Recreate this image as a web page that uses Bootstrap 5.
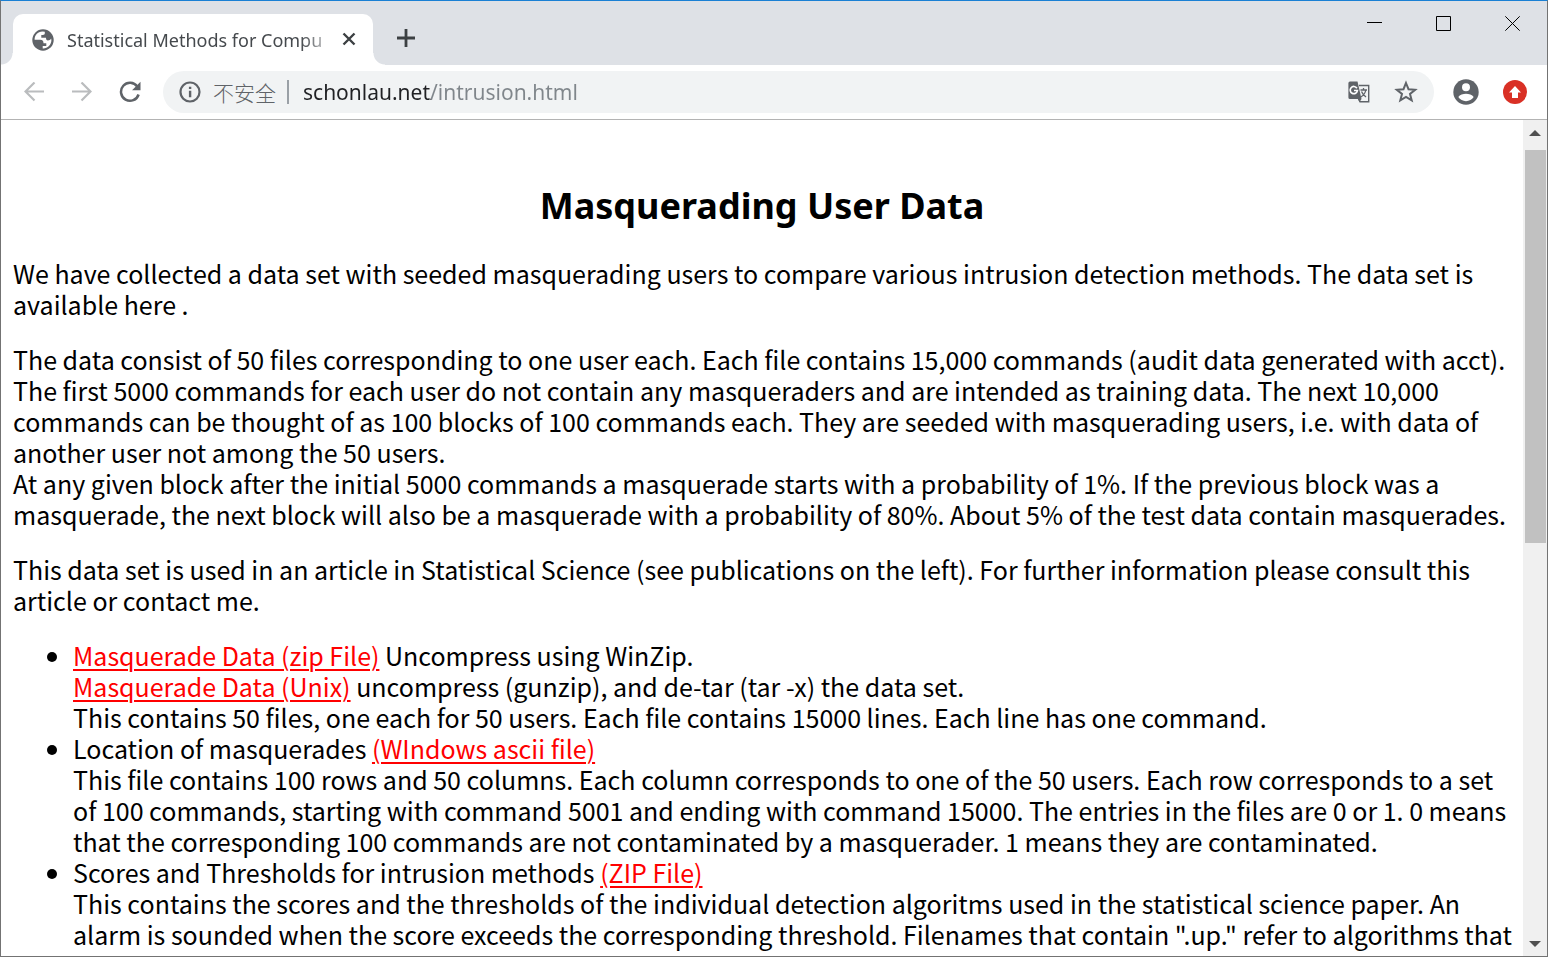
<!DOCTYPE html>
<html lang="en">
<head>
<meta charset="utf-8">
<meta name="viewport" content="width=device-width, initial-scale=1">
<title>Masquerading User Data</title>
<link href="https://cdn.jsdelivr.net/npm/bootstrap@5.3.0/dist/css/bootstrap.min.css" rel="stylesheet">
<style>
  body { font-family: "Noto Sans", "Noto Sans CJK SC", sans-serif; color: #000; background: #fff; }
  .app-window { border: 1px solid #737373; border-top-color: #1a80d4; }
  .icon-btn { border: 0; background: none; padding: 0; color: #5f6368; display: flex; align-items: center; justify-content: center; }
  .icon-btn svg, .tab-item svg { display: block; }

  /* Tab strip */
  .tab-strip { background: #dee1e6; height: 64px; }
  .tab-item { position: relative; width: 360px; height: 51px; margin-left: 12px; background: #fff; border-radius: 10px 10px 0 0; color: #3c4043; padding: 0 14px 0 19px; }
  .tab-item::before, .tab-item::after { content: ""; position: absolute; bottom: 0; width: 12px; height: 12px; }
  .tab-item::before { right: 100%; background: radial-gradient(circle at 0 0, #dee1e6 11px, #fff 12px); }
  .tab-item::after { left: 100%; background: radial-gradient(circle at 100% 0, #dee1e6 11px, #fff 12px); }
  .tab-title { margin-left: 13px; font-size: 18px; line-height: 28px; color: #45494d; -webkit-mask-image: linear-gradient(to right, #000 86%, transparent); mask-image: linear-gradient(to right, #000 86%, transparent); }
  .new-tab { height: 50px; }
  .caption-btn { width: 69px; height: 44px; color: #000; }

  /* Toolbar */
  .tool-bar { height: 55px; border-bottom: 1px solid #b3b3b3; padding: 0 20px 0 9px; }
  .nav-btn { width: 48px; height: 42px; }
  .nav-btn:disabled { color: #babcbe; }
  .omnibox { background: #f1f3f4; height: 42px; border-radius: 21px; margin: 0 19px 0 9px; padding: 0 16px 0 16px; }
  .site-label { font-family: "Noto Sans CJK SC", sans-serif; font-weight: 300; font-size: 21px; line-height: 28px; color: #5f6368; }
  .site-rule { width: 2px; height: 24px; margin-left: 11px; background: #9aa0a6; }
  .url-box { border: 0; outline: 0; margin-left: 14px; padding: 0; font-size: 21px; line-height: 32px; color: transparent; background: linear-gradient(to right, #202124 128px, #80868b 128px); -webkit-background-clip: text; background-clip: text; }

  /* Document */
  .doc { padding: 60px 12px 0 12px; font-family: "Noto Sans CJK SC", "Noto Sans", sans-serif; font-size: 25px; line-height: 31px; white-space: nowrap; }
  .doc h1 { font-family: "Noto Sans", sans-serif; font-size: 36px; line-height: 52px; font-weight: 700; margin-bottom: 26px; }
  .doc p { margin-bottom: 24px; }
  .doc ul { padding-left: 60px; }
  .doc a { color: #f00; text-decoration-thickness: 2px; text-underline-offset: 3px; }

  /* Scroll bar */
  .scroll-rail { width: 24px; background: #f0f0f0; }
  .scroll-rail .icon-btn { height: 25px; color: #505050; }
  .scroll-thumb { height: 50%; background: #c1c1c1; margin: 5px 1px 0 2px; }
</style>
</head>
<body>
<div class="app-window vh-100 d-flex flex-column overflow-hidden">
  <header>
    <div class="tab-strip d-flex">
      <div class="tab-item d-flex align-items-center align-self-end">
        <svg width="22" height="22" viewBox="0 0 22 22" aria-hidden="true"><circle cx="11" cy="11" r="10.700" fill="#5f6368"/><path fill="#fff" d="M10.500 2.600C5.500 2.600 2.600 6.500 2.600 10.800h5.600c2.600 0 3.300 1.500 3.300 3.400h2.800v2.700h-3.600v2.500c4.700.3 8.700-3.400 8.700-8.400l-.3-1.500c-.8 1.400-1.800 1.900-3.200 1.900-1.300 0-1.900-.8-1.900-2.600H9.300V5.900h1.500c1.400 0 2-.7 2-1.700V2.800z"/></svg>
        <span class="tab-title flex-grow-1 text-nowrap">Statistical Methods for Compu</span>
        <button class="icon-btn" type="button" aria-label="Close tab"><svg width="20" height="20" viewBox="0 0 20 20" stroke="#3c4043" stroke-width="2.400" fill="none"><path d="M4.500 3.500l11 11M15.500 3.500l-11 11"/></svg></button>
      </div>
      <button class="icon-btn new-tab align-self-start mt-2 pt-2 ms-4" type="button" aria-label="New tab"><svg width="18" height="18" viewBox="0 0 18 18" stroke="#3c4043" stroke-width="2.800" fill="none"><path d="M9 0v18M0 9h18"/></svg></button>
      <div class="ms-auto d-flex">
        <button class="icon-btn caption-btn" type="button" aria-label="Minimize"><svg width="15" height="15" viewBox="0 0 15 15"><path d="M0 6.500h15" stroke="#000"/></svg></button>
        <button class="icon-btn caption-btn" type="button" aria-label="Maximize"><svg width="15" height="15" viewBox="0 0 15 15"><path d="M.5.5h14v14H.5z" stroke="#000" fill="none"/></svg></button>
        <button class="icon-btn caption-btn" type="button" aria-label="Close"><svg width="15" height="15" viewBox="0 0 15 15"><path d="M.3.3l14.400 14.400M14.700.3L.3 14.700" stroke="#000"/></svg></button>
      </div>
    </div>
    <div class="tool-bar d-flex align-items-center">
      <button class="icon-btn nav-btn" type="button" aria-label="Back" disabled><svg width="20" height="20" viewBox="0 0 20 20" stroke="currentColor" stroke-width="2.200" fill="none"><path d="M20 9.500H2M10.500.500L1.500 9.500l9 9"/></svg></button>
      <button class="icon-btn nav-btn" type="button" aria-label="Forward" disabled><svg width="20" height="20" viewBox="0 0 20 20" stroke="currentColor" stroke-width="2.200" fill="none"><path d="M0 9.500h18M9.500.500l9 9-9 9"/></svg></button>
      <button class="icon-btn nav-btn" type="button" aria-label="Reload"><svg width="22" height="22" viewBox="0 0 22 22"><path d="M18.300 5.500A9 9 0 1 0 19.600 13.500" fill="none" stroke="currentColor" stroke-width="2.500"/><path d="M21.500.8v8.400h-8.400z" fill="currentColor"/></svg></button>
      <div class="omnibox flex-grow-1 d-flex align-items-center">
        <button class="icon-btn" type="button" aria-label="Site information"><svg width="22" height="22" viewBox="0 0 22 22"><circle cx="11" cy="11" r="9.500" fill="none" stroke="currentColor" stroke-width="2.200"/><path d="M9.900 9.700h2.400v6.500H9.900zM9.900 5.800h2.400v2.300H9.900z" fill="currentColor"/></svg></button>
        <label class="site-label text-nowrap ms-2 ps-1" for="url">不安全</label>
        <span class="site-rule"></span>
        <input class="url-box flex-grow-1" id="url" type="text" value="schonlau.net/intrusion.html" spellcheck="false">
        <button class="icon-btn" type="button" aria-label="Translate"><svg width="22" height="22" viewBox="0 0 22 22"><path d="M11 4.500h9.700v16.200H12l-2-4" fill="none" stroke="currentColor" stroke-width="1.400"/><path d="M2 .5h7.500l4 17.500H2A1.600 1.600 0 0 1 .4 16.400V2A1.600 1.600 0 0 1 2 .5z" fill="currentColor"/><path d="M10 18h3.500l-2 3z" fill="currentColor"/><path d="M12.500 9h6.500M15.500 7v2M17.800 9c-.5 3-2.500 5.500-5 7M13.500 10.500c1 2.500 2.500 4 4.500 5.500" fill="none" stroke="currentColor" stroke-width="1.300"/><path d="M8.900 7.200A3.600 3.600 0 1 0 9.400 9.500H6" fill="none" stroke="#fff" stroke-width="1.700"/></svg></button>
        <button class="icon-btn ms-4" type="button" aria-label="Bookmark this page"><svg width="24" height="24" viewBox="0 0 24 24"><path d="M12 3l2.500 6.200 6.700.5-5.200 4.200 1.700 6.500L12 16.900l-5.700 3.500L8 13.900 2.800 9.700l6.700-.5z" fill="none" stroke="currentColor" stroke-width="2"/></svg></button>
      </div>
      <button class="icon-btn" type="button" aria-label="Profile"><svg width="26" height="26" viewBox="0 0 26 26"><circle cx="13" cy="13" r="12.700" fill="currentColor"/><circle cx="13" cy="8.200" r="4" fill="#fff"/><path d="M5.300 18c1.400-2.300 5-3.300 7.700-3.300s6.300 1 7.700 3.300a9.200 9.200 0 0 1-15.400 0z" fill="#fff"/></svg></button>
      <button class="icon-btn ms-4" type="button" aria-label="Update available"><svg width="24" height="24" viewBox="0 0 24 24"><circle cx="12" cy="12" r="12" fill="#d93025"/><path d="M12 6l6 6.400h-3V18H9v-5.600H6z" fill="#fff"/></svg></button>
    </div>
  </header>
  <div class="d-flex flex-grow-1 overflow-hidden">
    <main class="doc flex-grow-1 overflow-hidden">
      <h1 class="text-center">Masquerading User Data</h1>
      <p>We have collected a data set with seeded masquerading users to compare various intrusion detection methods. The data set is<br>available here .</p>
      <p>The data consist of 50 files corresponding to one user each. Each file contains 15,000 commands (audit data generated with acct).<br>The first 5000 commands for each user do not contain any masqueraders and are intended as training data. The next 10,000<br>commands can be thought of as 100 blocks of 100 commands each. They are seeded with masquerading users, i.e. with data of<br>another user not among the 50 users.<br>At any given block after the initial 5000 commands a masquerade starts with a probability of 1%. If the previous block was a<br>masquerade, the next block will also be a masquerade with a probability of 80%. About 5% of the test data contain masquerades.</p>
      <p>This data set is used in an article in Statistical Science (see publications on the left). For further information please consult this<br>article or contact me.</p>
      <ul class="mb-0">
        <li><a href="#zip">Masquerade Data (zip File)</a> Uncompress using WinZip.<br><a href="#unix">Masquerade Data (Unix)</a> uncompress (gunzip), and de-tar (tar -x) the data set.<br>This contains 50 files, one each for 50 users. Each file contains 15000 lines. Each line has one command.</li>
        <li>Location of masquerades <a href="#ascii">(WIndows ascii file)</a><br>This file contains 100 rows and 50 columns. Each column corresponds to one of the 50 users. Each row corresponds to a set<br>of 100 commands, starting with command 5001 and ending with command 15000. The entries in the files are 0 or 1. 0 means<br>that the corresponding 100 commands are not contaminated by a masquerader. 1 means they are contaminated.</li>
        <li>Scores and Thresholds for intrusion methods <a href="#scores">(ZIP File)</a><br>This contains the scores and the thresholds of the individual detection algoritms used in the statistical science paper. An<br>alarm is sounded when the score exceeds the corresponding threshold. Filenames that contain ".up." refer to algorithms that</li>
      </ul>
    </main>
    <div class="scroll-rail flex-shrink-0 d-flex flex-column">
      <button class="icon-btn" type="button" aria-label="Scroll up"><svg width="12" height="6" viewBox="0 0 12 6"><path d="M6 0l6 6H0z" fill="currentColor"/></svg></button>
      <div class="flex-grow-1"><div class="scroll-thumb"></div></div>
      <button class="icon-btn" type="button" aria-label="Scroll down"><svg width="12" height="6" viewBox="0 0 12 6"><path d="M0 0h12L6 6z" fill="currentColor"/></svg></button>
    </div>
  </div>
</div>
<script src="https://cdn.jsdelivr.net/npm/bootstrap@5.3.0/dist/js/bootstrap.bundle.min.js"></script>
</body>
</html>
